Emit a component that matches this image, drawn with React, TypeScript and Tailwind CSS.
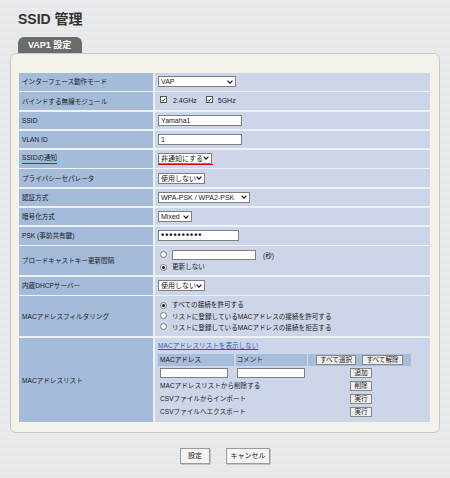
import * as React from "react";

function Chevron() {
  return (
    <svg width="6" height="4" viewBox="0 0 6 4" className="shrink-0">
      <path d="M0.6 0.6 L3 3.2 L5.4 0.6" stroke="#1a1a1a" strokeWidth="1.2" fill="none" />
    </svg>
  );
}

function Select({ text, className }: { text: string; className: string }) {
  return (
    <div
      className={`flex h-[11px] items-center justify-between border border-[#7f7f7f] bg-white pr-[2px] pl-[2px] text-[7px] leading-none ${className}`}
    >
      <span className="whitespace-nowrap">{text}</span>
      <Chevron />
    </div>
  );
}

function TextBox({ text, className }: { text?: string; className: string }) {
  return (
    <div
      className={`flex items-center border border-[#7f7f7f] bg-white pl-[2px] text-[7px] leading-none ${className}`}
    >
      {text}
    </div>
  );
}

function Check() {
  return (
    <span className="inline-flex h-[7px] w-[7px] shrink-0 items-center justify-center border border-[#555] bg-white">
      <svg viewBox="0 0 8 8" className="h-[6px] w-[6px]">
        <path d="M1.4 4.2 L3.2 6 L6.6 1.6" stroke="#111" strokeWidth="1.4" fill="none" />
      </svg>
    </span>
  );
}

function Radio({ on }: { on?: boolean }) {
  return (
    <span className="inline-flex h-[7px] w-[7px] shrink-0 items-center justify-center rounded-full border border-[#7a7a7a] bg-white">
      {on && <span className="h-[3px] w-[3px] rounded-full bg-[#111]" />}
    </span>
  );
}

function SmallButton({ children, className }: { children: React.ReactNode; className: string }) {
  return (
    <span
      className={`flex h-[10px] items-center justify-center border border-[#868686] bg-[#efefef] text-[6.6px] leading-none ${className}`}
    >
      {children}
    </span>
  );
}

function Label({ children }: { children: React.ReactNode }) {
  return (
    <div className="flex items-center bg-[#a4bbd9] pl-[3px] text-[6.6px] leading-[9px] whitespace-nowrap">
      {children}
    </div>
  );
}

function Value({ children, className = "" }: { children: React.ReactNode; className?: string }) {
  return <div className={`flex items-center bg-[#cdd6e8] pl-[3px] ${className}`}>{children}</div>;
}

export default function App() {
  return (
    <div className="h-[478px] w-[450px] overflow-hidden bg-[#e7e9ec] bg-[repeating-linear-gradient(to_bottom,#e9ebee_0px,#e9ebee_2px,#e2e4e8_3px,#e9ebee_4px)] font-['Liberation_Sans','Noto_Sans_CJK_JP',sans-serif] text-[#1a1a1a]">
      <div className="h-[37px] pt-[11px] pl-[18px]">
        <h1 className="text-[14px] leading-[16px] font-bold text-[#333]">SSID 管理</h1>
      </div>

      <div className="ml-[18px] h-[16px] w-[64px] rounded-t-[6px] bg-[#6b6b6b] pl-[10px] text-[9px] leading-[17px] font-bold text-white">
        VAP1 設定
      </div>

      <div className="ml-[10px] h-[380px] w-[430px] rounded-[6px] border border-[#c8c8c8] bg-[#f3f3ec] pt-[19px] pl-[8px]">
        <div className="grid w-[411px] grid-cols-[134px_1fr] grid-rows-[repeat(9,17.5px)_29px_17.5px_40px_84px] gap-x-[2px] gap-y-[1.75px] bg-[#eef1f6]">
          <Label>インターフェース動作モード</Label>
          <Value>
            <Select text="VAP" className="w-[78px]" />
          </Value>

          <Label>バインドする無線モジュール</Label>
          <Value className="text-[7px]">
            <span className="ml-[2px]">
              <Check />
            </span>
            <span className="ml-[6px]">2.4GHz</span>
            <span className="ml-[9px]">
              <Check />
            </span>
            <span className="ml-[5px]">5GHz</span>
          </Value>

          <Label>SSID</Label>
          <Value>
            <TextBox text="Yamaha1" className="h-[11px] w-[84px]" />
          </Value>

          <Label>VLAN ID</Label>
          <Value>
            <TextBox text="1" className="h-[11px] w-[84px]" />
          </Value>

          <Label>
            <span className="border-b-[1.5px] border-[#e50012] pb-[1px]">SSIDの通知</span>
          </Label>
          <Value>
            <div className="flex flex-col">
              <Select text="非通知にする" className="w-[54px] text-[6.6px]" />
              <div className="h-[1.5px] w-[55px] bg-[#e50012]" />
            </div>
          </Value>

          <Label>プライバシーセパレータ</Label>
          <Value>
            <Select text="使用しない" className="w-[47px] text-[6.6px]" />
          </Value>

          <Label>認証方式</Label>
          <Value>
            <Select text="WPA-PSK / WPA2-PSK" className="w-[92px]" />
          </Value>

          <Label>暗号化方式</Label>
          <Value>
            <Select text="Mixed" className="w-[34px]" />
          </Value>

          <Label>PSK (事前共有鍵)</Label>
          <Value>
            <div className="flex h-[11px] w-[81px] items-center border border-[#7f7f7f] bg-white pl-[2px] text-[9px] leading-none font-bold tracking-[1px]">
              ••••••••••
            </div>
          </Value>

          <Label>ブロードキャストキー更新間隔</Label>
          <Value className="flex-col items-start justify-center gap-[2px] text-[6.6px] leading-[9px]">
            <div className="flex items-center">
              <span className="ml-[2px]">
                <Radio />
              </span>
              <TextBox className="ml-[5px] h-[10px] w-[84px]" />
              <span className="ml-[7px]">(秒)</span>
            </div>
            <div className="flex items-center">
              <span className="ml-[2px]">
                <Radio on />
              </span>
              <span className="ml-[5px]">更新しない</span>
            </div>
          </Value>

          <Label>内蔵DHCPサーバー</Label>
          <Value>
            <Select text="使用しない" className="w-[47px] text-[6.6px]" />
          </Value>

          <Label>MACアドレスフィルタリング</Label>
          <Value className="flex-col items-start justify-center gap-[2px] text-[6.6px] leading-[9.5px]">
            <div className="flex items-center">
              <span className="ml-[2px]">
                <Radio on />
              </span>
              <span className="ml-[5px]">すべての接続を許可する</span>
            </div>
            <div className="flex items-center">
              <span className="ml-[2px]">
                <Radio />
              </span>
              <span className="ml-[5px]">リストに登録しているMACアドレスの接続を許可する</span>
            </div>
            <div className="flex items-center">
              <span className="ml-[2px]">
                <Radio />
              </span>
              <span className="ml-[5px]">リストに登録しているMACアドレスの接続を拒否する</span>
            </div>
          </Value>

          <Label>MACアドレスリスト</Label>
          <Value className="flex-col items-start justify-start pt-[3px] text-[6.6px]">
            <a className="text-[6.6px] leading-[10px] text-[#1d5cc2] underline">MACアドレスリストを表示しない</a>
            <div className="mt-[3px] grid grid-cols-[76px_71px_103px] auto-rows-[12px] gap-x-[1.5px] gap-y-[1px] leading-none">
              <div className="flex items-center bg-[#a8bddb] pl-[2px]">MACアドレス</div>
              <div className="flex items-center bg-[#a8bddb] pl-[1px]">コメント</div>
              <div className="flex items-center justify-center gap-[6px] bg-[#a8bddb]">
                <SmallButton className="w-[40px]">すべて選択</SmallButton>
                <SmallButton className="w-[41px]">すべて解除</SmallButton>
              </div>

              <div className="flex items-center pl-[2px]">
                <TextBox className="h-[10px] w-[68px]" />
              </div>
              <div className="flex items-center pl-[1px]">
                <TextBox className="h-[10px] w-[68px]" />
              </div>
              <div className="flex items-center justify-center pl-[3px]">
                <SmallButton className="w-[22px]">追加</SmallButton>
              </div>

              <div className="col-span-2 flex items-center pl-[2px]">MACアドレスリストから削除する</div>
              <div className="flex items-center justify-center pl-[3px]">
                <SmallButton className="w-[22px]">削除</SmallButton>
              </div>

              <div className="col-span-2 flex items-center pl-[2px]">CSVファイルからインポート</div>
              <div className="flex items-center justify-center pl-[3px]">
                <SmallButton className="w-[22px]">実行</SmallButton>
              </div>

              <div className="col-span-2 flex items-center pl-[2px]">CSVファイルへエクスポート</div>
              <div className="flex items-center justify-center pl-[3px]">
                <SmallButton className="w-[22px]">実行</SmallButton>
              </div>
            </div>
          </Value>
        </div>
      </div>

      <div className="mt-[15px] flex justify-center gap-[16px]">
        <button className="flex h-[16px] w-[30px] items-center justify-center border border-[#9a9a9a] bg-[#f4f4f4] text-[7px] text-[#222] shadow-[1px_1px_0_#c4c4c4]">
          設定
        </button>
        <button className="flex h-[16px] w-[44px] items-center justify-center border border-[#9a9a9a] bg-[#f4f4f4] text-[7px] text-[#222] shadow-[1px_1px_0_#c4c4c4]">
          キャンセル
        </button>
      </div>
    </div>
  );
}
